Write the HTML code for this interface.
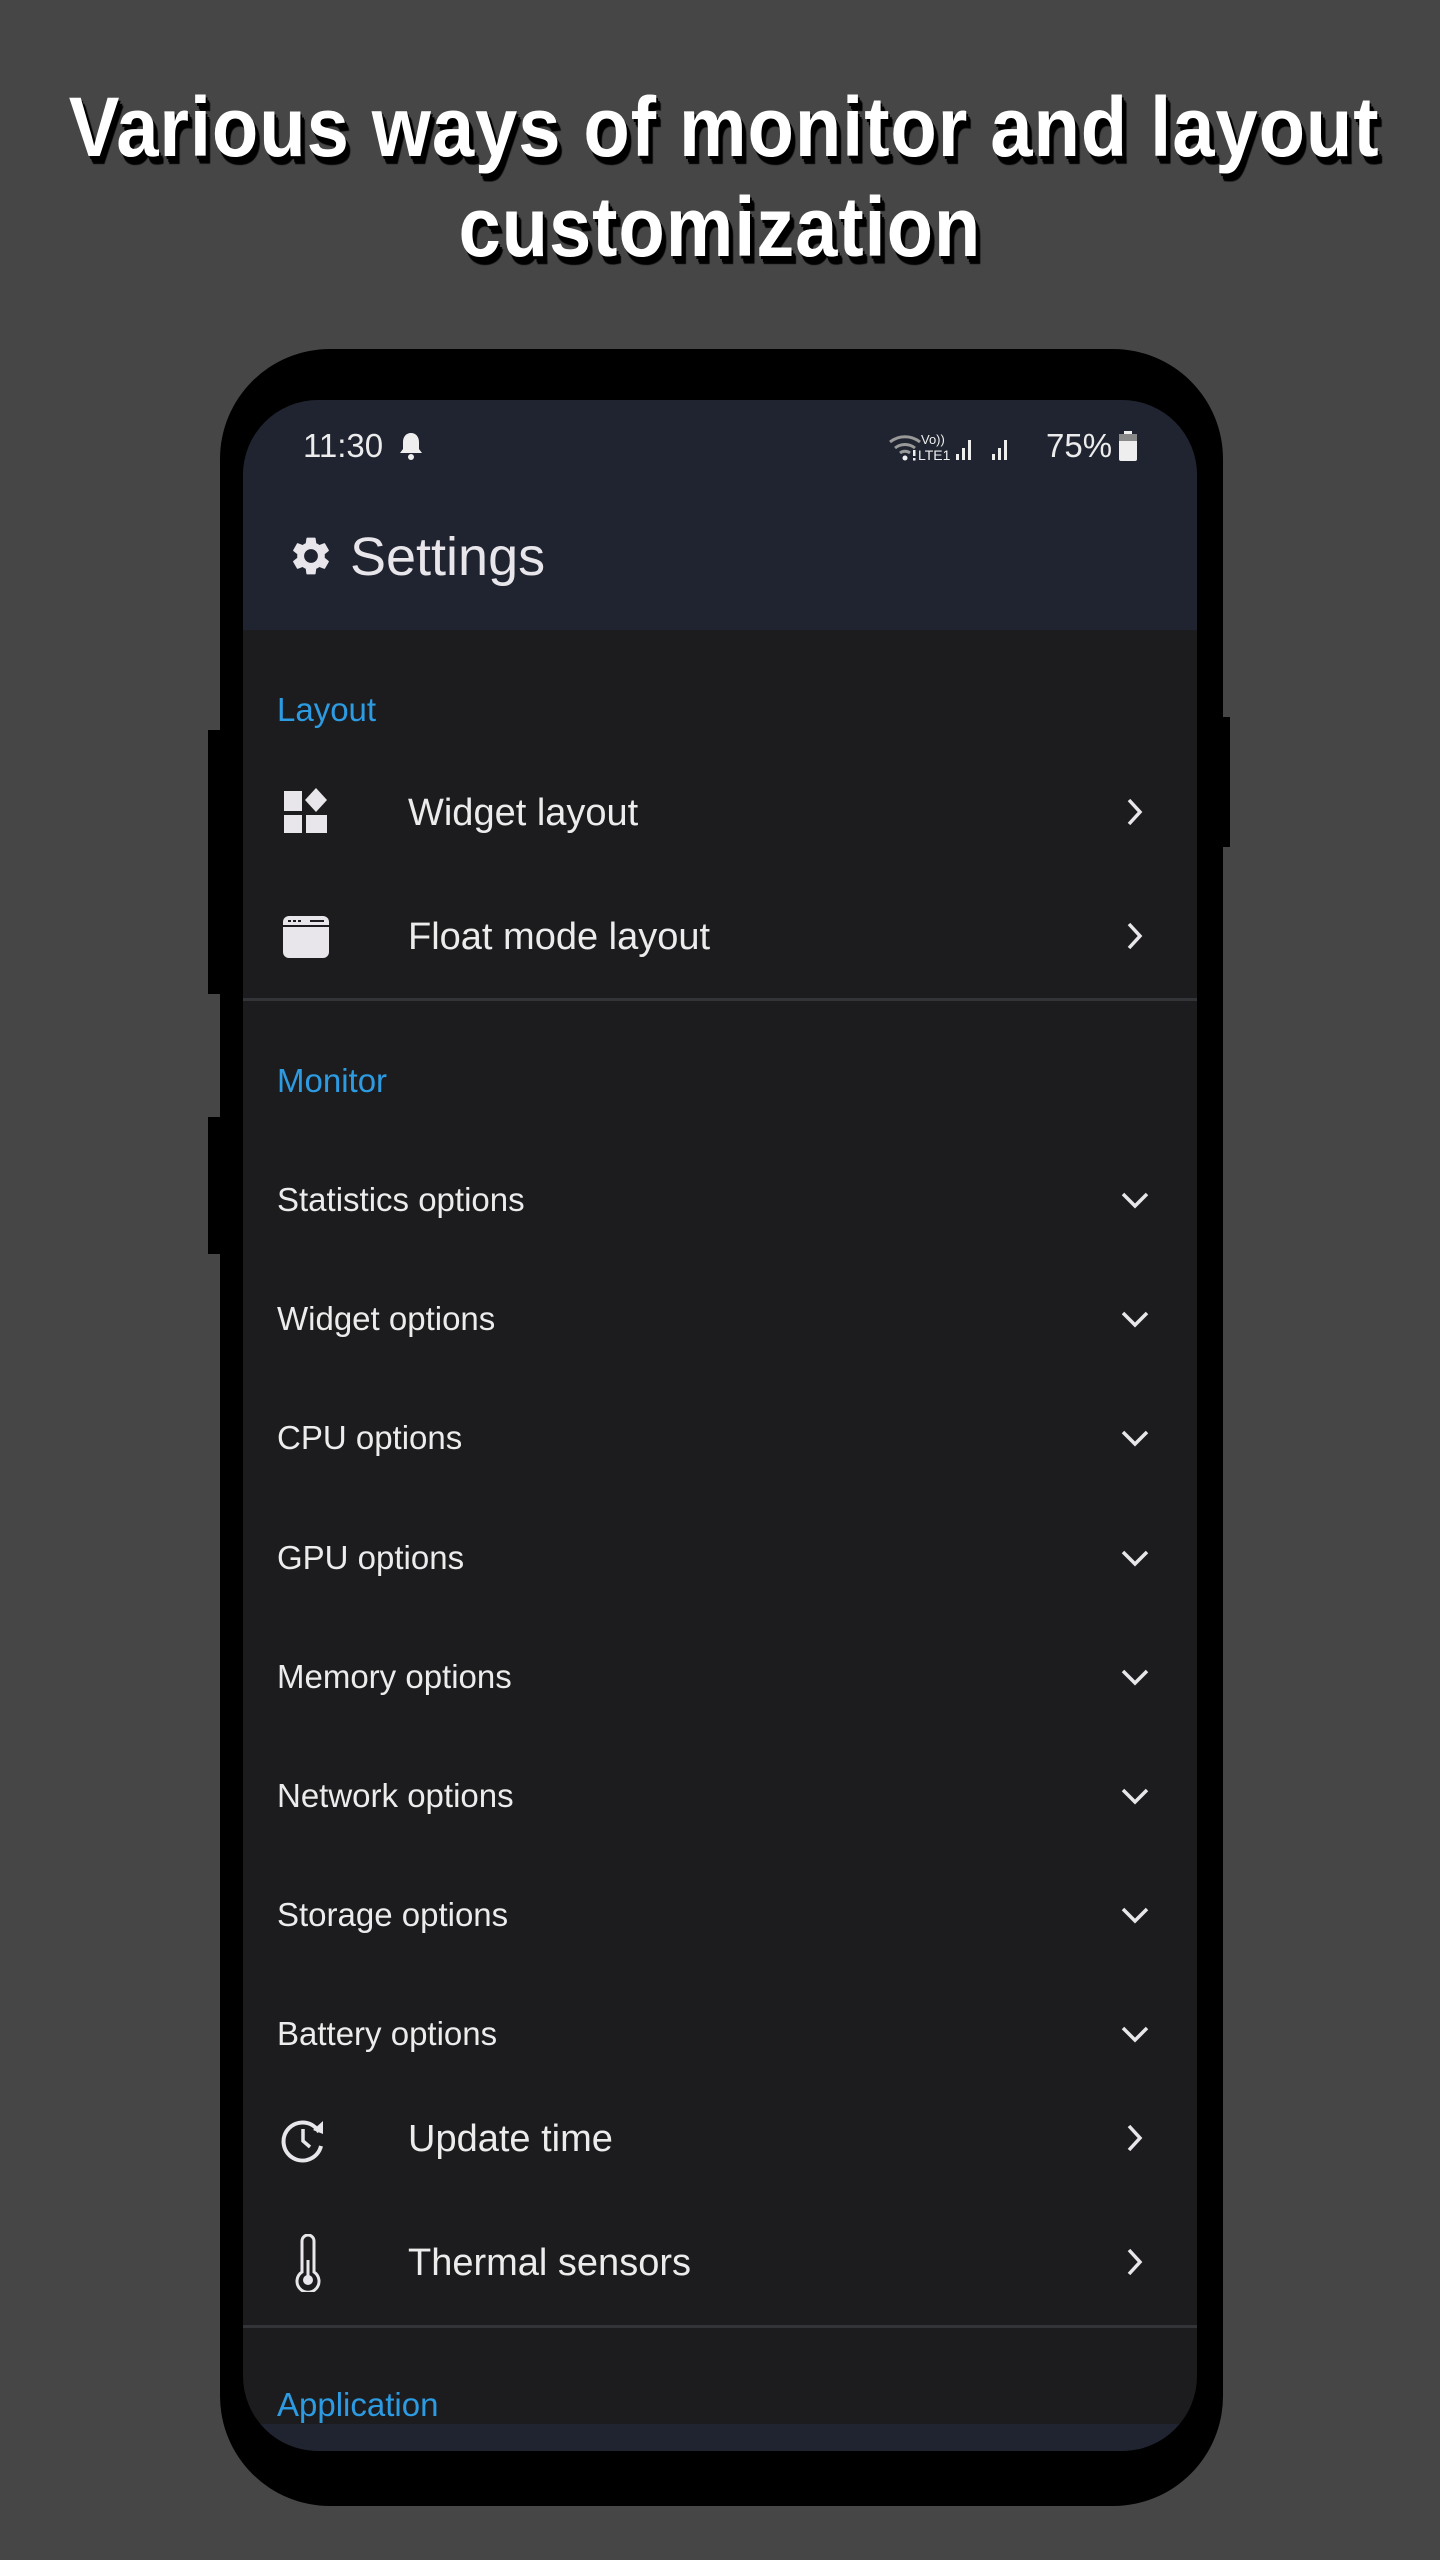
<!DOCTYPE html>
<html><head><meta charset="utf-8">
<style>
*{margin:0;padding:0;box-sizing:border-box}
body{width:1440px;height:2560px;background:#464646;position:relative;overflow:hidden;font-family:"Liberation Sans",sans-serif}
.title{position:absolute;left:0;width:1440px;text-align:center;color:#fff;font-weight:bold;font-size:84px;line-height:100px;white-space:nowrap;text-shadow:2px 3px 0 #000,4px 6px 0 #000,5px 8px 1px #000}
.title span{display:inline-block;transform:scaleX(0.905);letter-spacing:1px}
.phone{position:absolute;left:220px;top:349px;width:1003px;height:2157px;background:#000;border-radius:110px}
.btn{position:absolute;background:#000}
.screen{position:absolute;left:243px;top:400px;width:954px;height:2051px;background:#1c1c1e;border-radius:75px;overflow:hidden}
.hdr{position:absolute;left:0;top:0;width:954px;height:230px;background:#1f2430}
.t{position:absolute;color:#ececec;white-space:nowrap}
.sec{color:#2d9be2;font-size:33px}
.opt{font-size:33px}
.big{font-size:38px}
.div{position:absolute;left:0;width:954px;height:3px;background:#333437}
svg{position:absolute}
</style></head><body>
<div class="title" style="top:77px"><span>Various ways of monitor and layout</span></div>
<div class="title" style="top:177px"><span>customization</span></div>

<div class="btn" style="left:208px;top:730px;width:14px;height:264px"></div>
<div class="btn" style="left:208px;top:1117px;width:14px;height:137px"></div>
<div class="btn" style="left:1220px;top:717px;width:10px;height:130px"></div>
<div class="phone"></div>
<div class="screen">
  <div class="hdr"></div>
  <div style="position:absolute;left:0;bottom:0;width:954px;height:27px;background:#1f2430"></div>
  <div class="t" style="left:60px;top:26px;font-size:33px;line-height:40px">11:30</div>
  <svg style="left:157px;top:31px" width="22" height="30" viewBox="0 0 22 30"><path d="M11 2c-5 0-8 4-8 9v7l-3 4h22l-3-4v-7c0-5-3-9-8-9z" fill="#eee"/><circle cx="11" cy="26" r="3" fill="#eee"/></svg>
  <svg style="left:645px;top:30px" width="180" height="34" viewBox="0 0 180 34">
    <path d="M2 12a24 24 0 0 1 30 0M7 18a16 16 0 0 1 20 0M12 23a8 8 0 0 1 10 0" stroke="#999" stroke-width="3" fill="none"/>
    <circle cx="17" cy="28" r="2.5" fill="#eee"/><rect x="25" y="20" width="2.5" height="6" fill="#eee"/><rect x="25" y="28" width="2.5" height="2.5" fill="#eee"/>
    <text x="33" y="14" font-size="13" fill="#eee" font-family="Liberation Sans">Vo))</text>
    <text x="30" y="30" font-size="14" fill="#eee" font-family="Liberation Sans">LTE1</text>
    <rect x="68" y="24" width="3" height="6" fill="#eee"/><rect x="74" y="18" width="3" height="12" fill="#eee"/><rect x="80" y="10" width="3" height="20" fill="#eee"/>
    <rect x="104" y="24" width="3" height="6" fill="#eee"/><rect x="110" y="18" width="3" height="12" fill="#eee"/><rect x="116" y="10" width="3" height="20" fill="#eee"/>
  </svg>
  <div class="t" style="left:803px;top:26px;font-size:33px;line-height:40px">75%</div>
  <svg style="left:876px;top:31px" width="18" height="30" viewBox="0 0 18 30"><rect x="5" y="0" width="8" height="4" fill="#eee"/><rect x="0" y="3" width="18" height="27" rx="2" fill="#eee"/><rect x="0" y="3" width="18" height="7" fill="#888"/></svg>
  <svg style="left:45px;top:133px" width="46" height="46" viewBox="0 0 24 24"><path fill="#e8e6ea" d="M19.14 12.94c.04-.3.06-.61.06-.94s-.02-.64-.07-.94l2.03-1.58a.49.49 0 0 0 .12-.61l-1.920-3.32a.49.49 0 0 0-.59-.22l-2.39.96a7 7 0 0 0-1.62-.94l-.36-2.54a.48.48 0 0 0-.48-.41h-3.84a.48.48 0 0 0-.47.41l-.36 2.54c-.59.24-1.13.57-1.62.94l-2.39-.96a.48.48 0 0 0-.59.22L2.74 8.87a.47.47 0 0 0 .12.61l2.03 1.58c-.05.3-.09.63-.09.94s.02.64.07.94l-2.03 1.58a.49.49 0 0 0-.12.61l1.92 3.32c.12.22.37.29.59.22l2.39-.96c.5.38 1.03.7 1.62.94l.36 2.54c.05.24.24.41.48.41h3.84c.24 0 .44-.17.47-.41l.36-2.54c.59-.24 1.130-.56 1.62-.94l2.39.96c.22.08.47 0 .59-.22l1.92-3.32a.47.47 0 0 0-.12-.61l-2.01-1.58zM12 15.6A3.6 3.6 0 1 1 12 8.4a3.6 3.6 0 0 1 0 7.2z"/></svg>
  <div class="t" style="left:107px;top:127px;font-size:54px;line-height:60px;color:#e8e6ea">Settings</div>

  <div class="t sec" style="left:34px;top:290px;line-height:40px">Layout</div>
  <svg style="left:40px;top:388px" width="46" height="48" viewBox="0 0 46 48"><rect x="1" y="3" width="18" height="20" fill="#e8e6ea"/><path d="M33 0L44 12L33 24L22 12Z" fill="#e8e6ea"/><rect x="1" y="27" width="18" height="18" fill="#e8e6ea"/><rect x="23" y="27" width="21" height="18" fill="#e8e6ea"/></svg>
  <div class="t big" style="left:165px;top:391px;line-height:44px">Widget layout</div>
  <svg style="left:882px;top:397px" width="20" height="30" viewBox="0 0 20 30"><path d="M4 3l11 12-11 12" stroke="#e8e6ea" stroke-width="3.5" fill="none"/></svg>

  <svg style="left:40px;top:516px" width="46" height="42" viewBox="0 0 46 42"><rect x="0" y="0" width="46" height="42" rx="6" fill="#e8e6ea"/><rect x="0" y="9" width="46" height="2" fill="#1c1c1e"/><rect x="5" y="4" width="3" height="2" fill="#1c1c1e"/><rect x="10" y="4" width="3" height="2" fill="#1c1c1e"/><rect x="15" y="4" width="3" height="2" fill="#1c1c1e"/><rect x="27" y="4" width="14" height="2" fill="#1c1c1e"/></svg>
  <div class="t big" style="left:165px;top:515px;line-height:44px">Float mode layout</div>
  <svg style="left:882px;top:521px" width="20" height="30" viewBox="0 0 20 30"><path d="M4 3l11 12-11 12" stroke="#e8e6ea" stroke-width="3.5" fill="none"/></svg>

  <div class="div" style="top:598px"></div>
  <div class="t sec" style="left:34px;top:661px;line-height:40px">Monitor</div>

  <div class="t opt" style="left:34px;top:780px;line-height:40px">Statistics options</div>
  <div class="t opt" style="left:34px;top:899px;line-height:40px">Widget options</div>
  <div class="t opt" style="left:34px;top:1018px;line-height:40px">CPU options</div>
  <div class="t opt" style="left:34px;top:1138px;line-height:40px">GPU options</div>
  <div class="t opt" style="left:34px;top:1257px;line-height:40px">Memory options</div>
  <div class="t opt" style="left:34px;top:1376px;line-height:40px">Network options</div>
  <div class="t opt" style="left:34px;top:1495px;line-height:40px">Storage options</div>
  <div class="t opt" style="left:34px;top:1614px;line-height:40px">Battery options</div>
  <svg style="left:877px;top:790px" width="30" height="860" viewBox="0 0 30 860">
    <g stroke="#e8e6ea" stroke-width="3.5" fill="none">
      <path d="M3 4l12 12 12-12"/><path transform="translate(0,119)" d="M3 4l12 12 12-12"/><path transform="translate(0,238)" d="M3 4l12 12 12-12"/><path transform="translate(0,358)" d="M3 4l12 12 12-12"/><path transform="translate(0,477)" d="M3 4l12 12 12-12"/><path transform="translate(0,596)" d="M3 4l12 12 12-12"/><path transform="translate(0,715)" d="M3 4l12 12 12-12"/><path transform="translate(0,834)" d="M3 4l12 12 12-12"/>
    </g></svg>

  <svg style="left:38px;top:1716px" width="48" height="48" viewBox="0 0 48 48"><path d="M38 16A19 19 0 1 0 40 30" stroke="#e8e6ea" stroke-width="4" fill="none"/><path d="M32 14L42 5L42 18Z" fill="#e8e6ea"/><path d="M22 13v12l7 6" stroke="#e8e6ea" stroke-width="3.5" fill="none"/></svg>
  <div class="t big" style="left:165px;top:1717px;line-height:44px">Update time</div>
  <svg style="left:882px;top:1723px" width="20" height="30" viewBox="0 0 20 30"><path d="M4 3l11 12-11 12" stroke="#e8e6ea" stroke-width="3.5" fill="none"/></svg>

  <svg style="left:50px;top:1834px" width="30" height="58" viewBox="0 0 30 58"><path d="M9 38V7a6 6 0 0 1 12 0v31a11 11 0 1 1-12 0z" stroke="#e8e6ea" stroke-width="3" fill="none"/><circle cx="15" cy="46" r="5" fill="#e8e6ea"/><rect x="13.5" y="26" width="3" height="18" fill="#e8e6ea"/></svg>
  <div class="t big" style="left:165px;top:1841px;line-height:44px">Thermal sensors</div>
  <svg style="left:882px;top:1847px" width="20" height="30" viewBox="0 0 20 30"><path d="M4 3l11 12-11 12" stroke="#e8e6ea" stroke-width="3.5" fill="none"/></svg>

  <div class="div" style="top:1925px"></div>
  <div class="t sec" style="left:34px;top:1985px;line-height:40px">Application</div>
</div>
</body></html>
